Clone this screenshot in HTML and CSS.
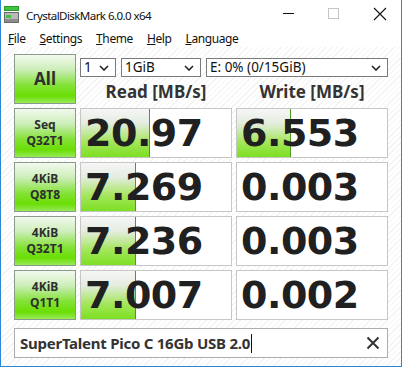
FILE: index.html
```html
<!DOCTYPE html>
<html lang="en">
<head>
    <meta charset="UTF-8">
    <title>CrystalDiskMark 6.0.0 x64</title>
    <link rel="stylesheet" href="styles.css">
</head>
<body>
    <div class="window">
        <div class="titlebar">
            <svg class="app-icon" width="16" height="18" viewBox="0 0 16 18">
                <rect x="0.5" y="0.5" width="14" height="4" fill="#3fc23f" stroke="#2a9a2a"/>
                <rect x="0.5" y="6.5" width="14" height="10" fill="#b9b9b9" stroke="#6a6a6a"/>
                <rect x="2" y="9" width="5" height="3" fill="#3fc23f"/>
                <rect x="1" y="13" width="13" height="3" fill="#8d8d8d"/>
            </svg>
            <span class="title">CrystalDiskMark 6.0.0 x64</span>
            <div class="controls">
                <svg width="46" height="30" viewBox="0 0 46 30"><line x1="20" y1="13.5" x2="31" y2="13.5" stroke="#111" stroke-width="1"/></svg>
                <svg width="46" height="30" viewBox="0 0 46 30"><rect x="19.5" y="8.5" width="10" height="10" fill="none" stroke="#c4c4c4" stroke-width="1"/></svg>
                <svg width="46" height="30" viewBox="0 0 46 30"><path d="M19 8 L31 20 M31 8 L19 20" stroke="#111" stroke-width="1.1"/></svg>
            </div>
        </div>

        <div class="menubar">
            <span><u>F</u>ile</span>
            <span><u>S</u>ettings</span>
            <span><u>T</u>heme</span>
            <span><u>H</u>elp</span>
            <span><u>L</u>anguage</span>
        </div>

        <div class="content">
            <div class="grid">
                <div class="btn btn-all">All</div>
                <div class="top">
                    <div class="selects">
                        <div class="select sel-count">1 <svg class="chev" width="10" height="6" viewBox="0 0 10 6"><path d="M1 1 L5 5 L9 1" fill="none" stroke="#222" stroke-width="1.6"/></svg></div>
                        <div class="select sel-size">1GiB <svg class="chev" width="10" height="6" viewBox="0 0 10 6"><path d="M1 1 L5 5 L9 1" fill="none" stroke="#222" stroke-width="1.6"/></svg></div>
                        <div class="select sel-drive">E: 0% (0/15GiB) <svg class="chev" width="10" height="6" viewBox="0 0 10 6"><path d="M1 1 L5 5 L9 1" fill="none" stroke="#222" stroke-width="1.6"/></svg></div>
                    </div>
                    <div class="heads">
                        <div>Read [MB/s]</div>
                        <div>Write [MB/s]</div>
                    </div>
                </div>

                <div class="btn">Seq<br>Q32T1</div>
                <div class="result" style="--fill: 69px">20.97</div>
                <div class="result" style="--fill: 54px">6.553</div>

                <div class="btn">4KiB<br>Q8T8</div>
                <div class="result" style="--fill: 55px">7.269</div>
                <div class="result" style="--fill: 0px">0.003</div>

                <div class="btn">4KiB<br>Q32T1</div>
                <div class="result" style="--fill: 55px">7.236</div>
                <div class="result" style="--fill: 0px">0.003</div>

                <div class="btn">4KiB<br>Q1T1</div>
                <div class="result" style="--fill: 55px">7.007</div>
                <div class="result" style="--fill: 0px">0.002</div>
            </div>

            <div class="comment">
                <span class="comment-text">SuperTalent Pico C 16Gb USB 2.0<span class="caret"></span></span>
                <svg width="14" height="14" viewBox="0 0 14 14"><path d="M1.5 1.5 L12.5 12.5 M12.5 1.5 L1.5 12.5" stroke="#333" stroke-width="2"/></svg>
            </div>
        </div>
    </div>
</body>
</html>
```

FILE: styles.css
```css
:root {
    --accent: #2a88d6;
    --text: #262626;
    --box-border: #c6c6c6;
}

* {
    margin: 0;
    padding: 0;
    box-sizing: border-box;
}

body {
    font-family: 'Noto Sans', 'Open Sans', sans-serif;
    color: var(--text);
    background: #fff;
}

.window {
    width: 402px;
    height: 367px;
    border: 1px solid var(--accent);
    border-top: none;
    display: flex;
    flex-direction: column;
    background-color: #fff;
    background-image: repeating-linear-gradient(135deg, #fff 0 3px, #f3f3f3 3px 4px);
}

.titlebar {
    height: 30px;
    background: #fff;
    display: flex;
    align-items: center;
}

.app-icon {
    margin: 0 6px 0 3px;
}

.title {
    font-size: 11.6px;
    letter-spacing: -0.6px;
    color: #111;
    flex: 1;
}

.controls {
    display: flex;
    align-self: flex-start;
}

.menubar {
    height: 17px;
    background: #fff;
    display: flex;
    align-items: center;
    gap: 14px;
    padding-left: 7px;
    font-size: 12px;
    letter-spacing: -0.4px;
    color: #111;
}

.menubar u {
    text-underline-offset: 1px;
}

.content {
    flex: 1;
    padding: 7px 13px 8px 13px;
    display: flex;
    flex-direction: column;
    gap: 8px;
}

.grid {
    display: grid;
    grid-template-columns: 62px 152px 152px;
    grid-auto-rows: 50px;
    column-gap: 4px;
    row-gap: 4px;
}

.btn {
    border: 1px solid #8a9a8c;
    background: linear-gradient(#f3f9ee 0%, #cdeebb 30%, #86e23a 62%, #6ade04 85%, #96ea58 100%);
    display: flex;
    align-items: center;
    justify-content: center;
    text-align: center;
    font-size: 12px;
    font-weight: bold;
    line-height: 16px;
    color: #2e2e2e;
}

.btn-all {
    font-size: 17px;
}

.top {
    grid-column: 2 / 4;
    display: flex;
    flex-direction: column;
}

.selects {
    display: flex;
    gap: 5px;
    margin-top: 4px;
    height: 19px;
}

.select {
    border: 1px solid #7a7a7a;
    background: #fff;
    font-size: 13.5px;
    line-height: 17px;
    padding-left: 3px;
    display: flex;
    align-items: center;
    justify-content: space-between;
    padding-right: 6px;
    color: #111;
}

.sel-count { width: 36px; }
.sel-size { width: 80px; }
.sel-drive { flex: 1; }

.heads {
    display: grid;
    grid-template-columns: 152px 152px;
    column-gap: 4px;
    margin-top: 2px;
    font-size: 17px;
    font-weight: bold;
    line-height: 25px;
    text-align: center;
    color: #333;
}

.result {
    border: 1px solid var(--box-border);
    background-color: #fff;
    background-image:
        linear-gradient(to left, #4a9c1c 1px, transparent 1px),
        linear-gradient(#f6f6f6 0%, #e4ecdf 30%, #a4e65c 68%, #7ddf22 100%);
    background-size: var(--fill) 100%;
    background-repeat: no-repeat;
    font-family: 'DejaVu Sans', sans-serif;
    font-weight: bold;
    font-size: 38px;
    line-height: 48px;
    padding-left: 4px;
    color: #202020;
    letter-spacing: -0.5px;
}

.comment {
    height: 30px;
    border: 1px solid #adadad;
    background: #fff;
    display: flex;
    align-items: center;
    justify-content: space-between;
    padding: 0 7px 0 5px;
}

.comment-text {
    font-size: 15px;
    font-weight: bold;
    letter-spacing: -0.25px;
    color: #333;
    display: flex;
    align-items: center;
}

.caret {
    display: inline-block;
    width: 1px;
    height: 19px;
    background: #111;
    margin-left: 1px;
}
```
